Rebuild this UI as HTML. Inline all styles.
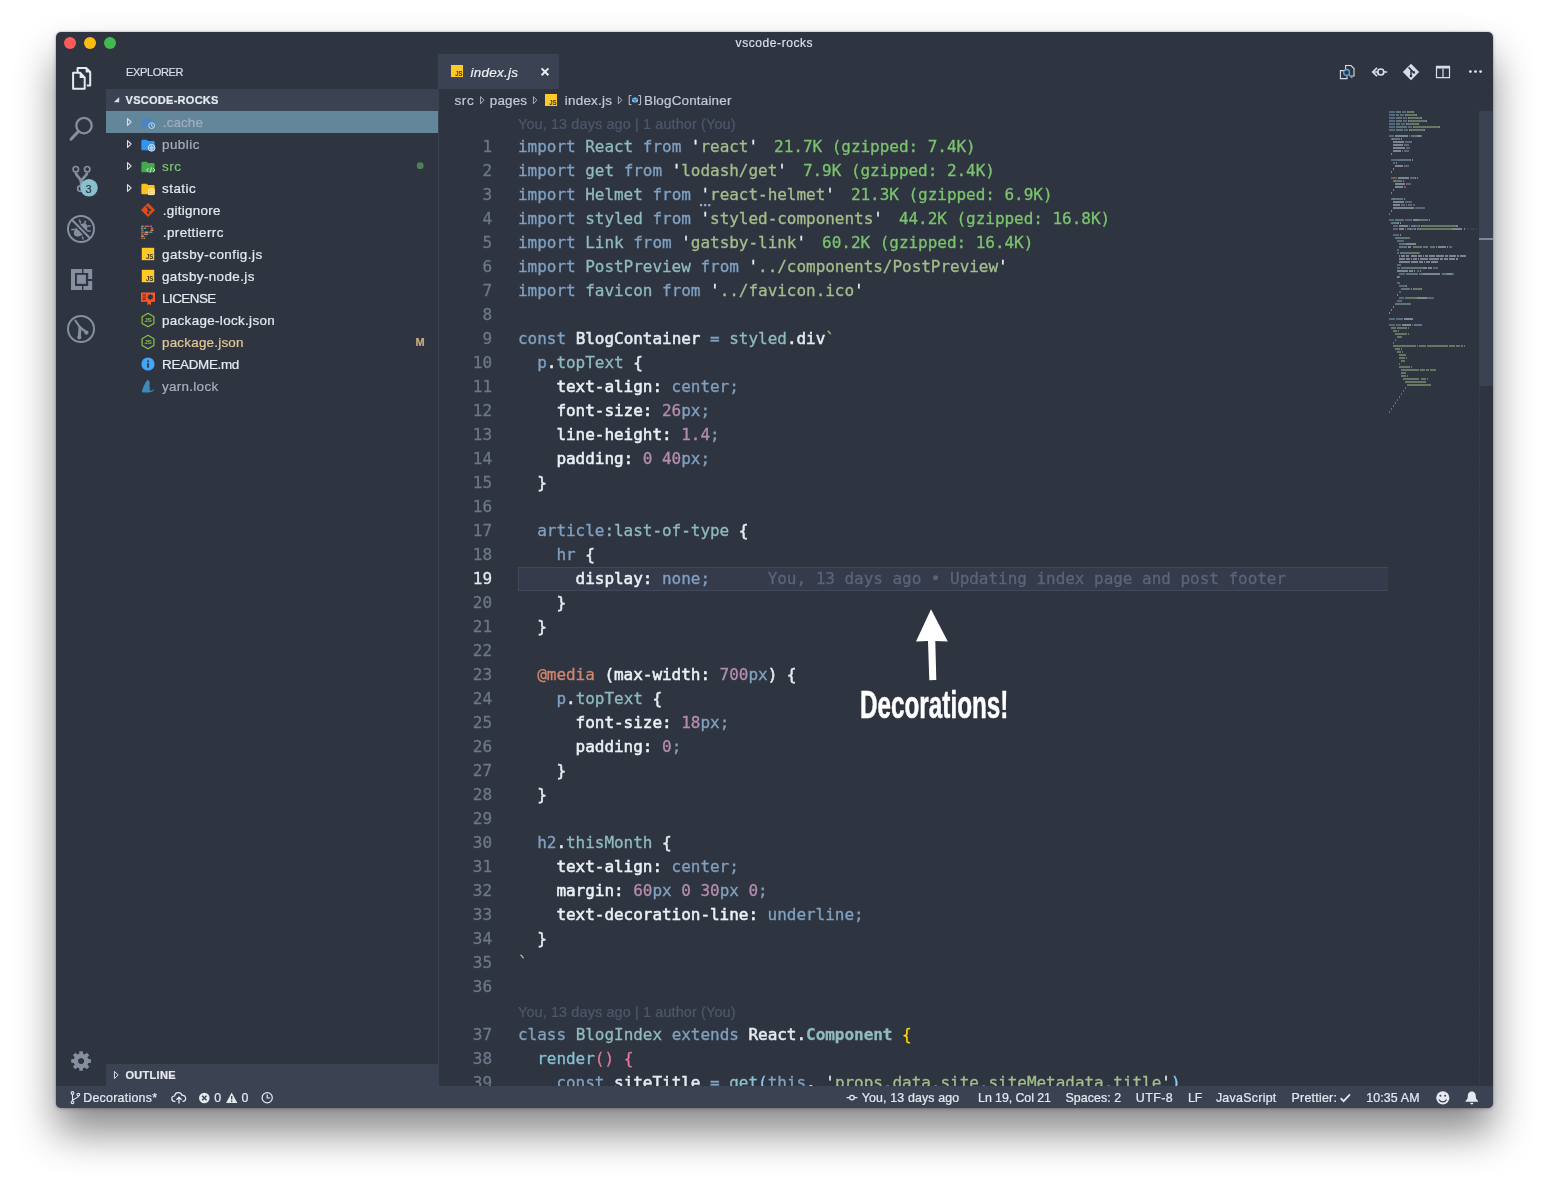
<!DOCTYPE html>
<html lang="en">
<head>
<meta charset="utf-8">
<title>vscode-rocks</title>
<style>
*{box-sizing:border-box;margin:0;padding:0}
html,body{width:1549px;height:1188px;background:#fff;overflow:hidden}
body{position:relative;font-family:"Liberation Sans", sans-serif}
#shadow{position:absolute;left:56px;top:32px;width:1437px;height:1076px;border-radius:5px;
 box-shadow:0 0 0 1px rgba(0,0,0,.08),0 1px 4px rgba(0,0,0,.20),0 25px 40px rgba(0,0,0,.46)}
#win{will-change:transform;position:absolute;left:56px;top:32px;width:1437px;height:1076px;background:#2e3440;border-radius:5px;overflow:hidden}
.abs{position:absolute}
.t{position:absolute;white-space:pre;-webkit-text-stroke:.22px}
.tl{position:absolute;top:5px;width:12px;height:12px;border-radius:50%}
#code{left:383px;top:79px;width:1054px;height:975px;overflow:hidden;font-family:"DejaVu Sans Mono", "Liberation Mono", monospace;font-size:16px;letter-spacing:-0.0328px;-webkit-text-stroke:.3px}
.ln{position:absolute;left:0;width:53px;height:24px;line-height:24px;text-align:right;color:#6d7789}
.ln.cur{color:#e5e9f0}
.cl{position:absolute;left:79px;height:24px;line-height:24px;white-space:pre;color:#d8dee9}
.kw{color:#81a1c1}.cls{color:#8fbcbb}.clsb{color:#8fbcbb;font-weight:bold}.fn{color:#88c0d0}.s{color:#a3be8c}.q{color:#eceff4}
.w{color:#e5e9f0;-webkit-text-stroke:.55px}.wb{color:#eceff4;-webkit-text-stroke:.55px}.n{color:#b48ead}.at{color:#d08770}.ic{color:#7cc36e;margin-left:16px}
.b1{color:#ffd700}.b2{color:#e07a9c}.b3{color:#87cefa}.v{color:#d8dee9}.ghost{color:#5b6578}
</style>
</head>
<body>
<div id="shadow"></div>
<div id="win">
 <div class="tl" style="left:8px;background:#fc5b57"></div>
 <div class="tl" style="left:28px;background:#fdbc12"></div>
 <div class="tl" style="left:48px;background:#3fb950"></div>
<span class="t" style="left:679.60px;top:1.00px;line-height:20px;font-size:12px;color:#d8dee9;letter-spacing:0.576px;">vscode-rocks</span>
<svg class="abs" style="left:0;top:0" width="1437" height="1076" viewBox="56 32 1437 1076"><g fill="none" stroke="#e5e9f0" stroke-width="2" stroke-linejoin="round"><path d="M73.100 72.800h7l4.600 4.600v11.300h-11.600z"/><path d="M77.6 72V68h8.6l4 4v13.6h-3.4"/></g><path d="M79.600 72.600v5.400h5.400z" fill="#e5e9f0"/><path d="M85.6 67.8v4.8h4.8z" fill="#e5e9f0"/><circle cx="84" cy="125.6" r="7.7" fill="none" stroke="#868f9e" stroke-width="2.3"/><path d="M78.4 131.4L71 139.2" stroke="#868f9e" stroke-width="3" stroke-linecap="round"/><g fill="none" stroke="#868f9e"><circle cx="75.8" cy="169.2" r="2.7" stroke-width="1.7"/><circle cx="87.2" cy="169.2" r="2.7" stroke-width="1.7"/><circle cx="80.3" cy="188.6" r="2.7" stroke-width="1.7"/><path d="M75.8 172.4c0 4 5 5 5.2 9.5M87.2 172.4c0 4 -5.6 5 -6 9.5v4" stroke-width="2.8"/></g><circle cx="89" cy="187.8" r="8.8" fill="#88c0d0"/><g stroke="#868f9e" fill="none"><circle cx="81" cy="229" r="13" stroke-width="2"/><ellipse cx="80.700" cy="230" rx="4.800" ry="8.200" transform="rotate(47 80.700 230)" fill="#868f9e" stroke="none"/><path d="M71.200 229.400h4.400M82.200 236.600l1.100 2.900M79.300 219.600l1.300 4M85.500 220.800l-.9 3.400M87.400 225.900h3.300M86.200 229.600l1.400 1.500h3.100" stroke-width="1.500"/><path d="M74.200 222.100l13.800 14.100" stroke="#2e3440" stroke-width="5.200"/><path d="M71.900 219.700l18.300 18.700" stroke-width="2.100"/></g><g fill="#868f9e"><path d="M71 269h11v4h-7v13h7v4h-11z"/><path d="M83.400 269h8.800v10h-4v-6h-4.800z"/><path d="M88.200 281h4v9h-8.800v-4h4.800z"/><rect x="76.9" y="274.8" width="9" height="9"/></g><g stroke="#868f9e" fill="none"><circle cx="81" cy="329" r="13" stroke-width="2"/><path d="M75.400 320.600l4.600 6.800" stroke-width="2" stroke-linecap="round"/><path d="M80 327.400l-.7 9.800" stroke-width="3" stroke-linecap="round"/><path d="M80.200 327.600l6 4.400" stroke-width="2.400" stroke-linecap="round"/></g><circle cx="79.3" cy="337.3" r="2.1" fill="#868f9e"/><circle cx="86.4" cy="332.6" r="2.1" fill="#868f9e"/><path d="M88.25 1059.10 L90.96 1059.31 L90.96 1062.69 L88.25 1062.90 L87.50 1064.71 L89.27 1066.77 L86.87 1069.17 L84.81 1067.40 L83.00 1068.15 L82.79 1070.86 L79.41 1070.86 L79.20 1068.15 L77.39 1067.40 L75.33 1069.17 L72.93 1066.77 L74.70 1064.71 L73.95 1062.90 L71.24 1062.69 L71.24 1059.31 L73.95 1059.10 L74.70 1057.29 L72.93 1055.23 L75.33 1052.83 L77.39 1054.60 L79.20 1053.85 L79.41 1051.14 L82.79 1051.14 L83.00 1053.85 L84.81 1054.60 L86.87 1052.83 L89.27 1055.23 L87.50 1057.29 Z M81.10 1057.90 a3.1 3.1 0 1 0 0.01 0z" fill="#868f9e" fill-rule="evenodd"/></svg><span class="t" style="left:29.40px;top:146.80px;line-height:20px;font-size:11px;color:#2e3440;letter-spacing:0.875px;">3</span>
<div class="abs" style="left:50px;top:57px;width:332px;height:22px;background:#3b4252;"></div>
<div class="abs" style="left:50px;top:79px;width:332px;height:22px;background:#64869a;"></div>
<div class="abs" style="left:50px;top:1032px;width:332px;height:22px;background:#3b4252;"></div>
<div class="abs" style="left:382px;top:22px;width:1px;height:1032px;background:#3b4252;"></div>
<span class="t" style="left:70.00px;top:30.00px;line-height:20px;font-size:11px;color:#d8dee9;letter-spacing:-0.340px;">EXPLORER</span>
<span class="t" style="left:69.60px;top:58.20px;line-height:20px;font-size:11px;color:#e5e9f0;letter-spacing:0.271px;font-weight:bold;">VSCODE-ROCKS</span>
<span class="t" style="left:69.40px;top:1033.10px;line-height:20px;font-size:11px;color:#e5e9f0;letter-spacing:0.303px;font-weight:bold;">OUTLINE</span>
<span class="t" style="left:106.80px;top:81.00px;line-height:20px;font-size:13.4px;color:#9fb0bd;letter-spacing:0.124px;">.cache</span>
<svg class="abs" style="left:84px;top:82.6px" width="16" height="16" viewBox="0 0 16 16"  opacity=".9"><g opacity="1"><path d="M6.67 2.67H2.67c-.74 0-1.33.59-1.33 1.33v8c0 .73.6 1.33 1.33 1.33h10.67c.73 0 1.33-.6 1.33-1.33V5.33c0-.74-.6-1.33-1.33-1.33H8L6.67 2.67z" fill="#4a86c0"/><circle cx="11.6" cy="10.6" r="3.6" fill="#4a86c0"/><circle cx="11.6" cy="10.6" r="2.9" fill="none" stroke="#d6e6f5" stroke-width="1"/><path d="M11.6 8.8v2l1.5 .9" stroke="#d6e6f5" stroke-width=".9" fill="none"/></g></svg>
<span class="t" style="left:106.00px;top:103.00px;line-height:20px;font-size:13.4px;color:#a7afbd;letter-spacing:0.483px;">public</span>
<svg class="abs" style="left:84px;top:104.6px" width="16" height="16" viewBox="0 0 16 16" ><g opacity="1"><path d="M6.67 2.67H2.67c-.74 0-1.33.59-1.33 1.33v8c0 .73.6 1.33 1.33 1.33h10.67c.73 0 1.33-.6 1.33-1.33V5.33c0-.74-.6-1.33-1.33-1.33H8L6.67 2.67z" fill="#2f96f3"/><circle cx="11.6" cy="10.8" r="3.4" fill="#2f8fe8" stroke="#cfe6fb" stroke-width="1"/><path d="M8.4 10.8h6.4M11.6 7.6v6.4M9.8 8.2c1 2 1 3.6 0 5.4M13.4 8.2c-1 2-1 3.6 0 5.4" stroke="#cfe6fb" stroke-width=".7" fill="none"/></g></svg>
<span class="t" style="left:106.00px;top:125.00px;line-height:20px;font-size:13.4px;color:#7cc36e;letter-spacing:0.514px;">src</span>
<svg class="abs" style="left:84px;top:126.6px" width="16" height="16" viewBox="0 0 16 16" ><g opacity="1"><path d="M6.67 2.67H2.67c-.74 0-1.33.59-1.33 1.33v8c0 .73.6 1.33 1.33 1.33h10.67c.73 0 1.33-.6 1.33-1.33V5.33c0-.74-.6-1.33-1.33-1.33H8L6.67 2.67z" fill="#43a94c"/><path d="M8.6 9l-2 2 2 2M13 9l2 2-2 2M11.6 8.4l-1.6 5.4" stroke="#c8e6c9" stroke-width="1" fill="none"/></g></svg>
<span class="t" style="left:106.00px;top:147.00px;line-height:20px;font-size:13.4px;color:#e5e9f0;letter-spacing:0.489px;">static</span>
<svg class="abs" style="left:84px;top:148.6px" width="16" height="16" viewBox="0 0 16 16" ><g opacity="1"><path d="M6.67 2.67H2.67c-.74 0-1.33.59-1.33 1.33v8c0 .73.6 1.33 1.33 1.33h10.67c.73 0 1.33-.6 1.33-1.33V5.33c0-.74-.6-1.33-1.33-1.33H8L6.67 2.67z" fill="#fdc11a"/><rect x="8" y="7.4" width="6.6" height="6.6" rx=".8" fill="#ffc927"/><rect x="8.6" y="8" width="5.6" height="5.6" rx=".6" fill="none" stroke="#fff1c2" stroke-width=".9"/><path d="M9.8 9.8h3.2M9.8 11.6h3.2" stroke="#fff1c2" stroke-width=".9"/></g></svg>
<span class="t" style="left:106.80px;top:169.00px;line-height:20px;font-size:13.4px;color:#e5e9f0;letter-spacing:0.291px;">.gitignore</span>
<svg class="abs" style="left:84px;top:170px" width="16" height="16" viewBox="0 0 16 16" ><path d="M8 .9L15.1 8 8 15.1 .9 8z" fill="#e64a19"/><path d="M6.2 4.4l3.4 3.4M8.2 6.2v5" stroke="#2e3440" stroke-width="1.3" fill="none"/><circle cx="8.2" cy="11" r="1.1" fill="#2e3440"/><circle cx="10.2" cy="8.2" r="1.1" fill="#2e3440"/></svg>
<span class="t" style="left:106.80px;top:191.00px;line-height:20px;font-size:13.4px;color:#e5e9f0;letter-spacing:0.403px;">.prettierrc</span>
<svg class="abs" style="left:84px;top:192px" width="16" height="16" viewBox="0 0 16 16"  opacity=".82"><rect x="1" y="1.6" width="3" height="1.3" rx=".6" fill="#56b3b4"/><rect x="4.5" y="1.6" width="5" height="1.3" rx=".6" fill="#ea5e5e"/><rect x="10" y="1.6" width="2" height="1.3" rx=".6" fill="#bf85bf"/><rect x="1" y="3.6" width="2" height="1.3" rx=".6" fill="#f7ba3e"/><rect x="3.5" y="3.6" width="3" height="1.3" rx=".6" fill="#56b3b4"/><rect x="10.5" y="3.6" width="3" height="1.3" rx=".6" fill="#ea5e5e"/><rect x="1" y="5.6" width="2.5" height="1.3" rx=".6" fill="#bf85bf"/><rect x="10.5" y="5.6" width="3" height="1.3" rx=".6" fill="#f7ba3e"/><rect x="1" y="7.6" width="3" height="1.3" rx=".6" fill="#ea5e5e"/><rect x="4.5" y="7.6" width="4" height="1.3" rx=".6" fill="#f7ba3e"/><rect x="9" y="7.6" width="3.5" height="1.3" rx=".6" fill="#56b3b4"/><rect x="1" y="9.6" width="2" height="1.3" rx=".6" fill="#56b3b4"/><rect x="3.5" y="9.6" width="5" height="1.3" rx=".6" fill="#bf85bf"/><rect x="1" y="11.6" width="3" height="1.3" rx=".6" fill="#f7ba3e"/><rect x="4.5" y="11.6" width="2" height="1.3" rx=".6" fill="#4d616e"/><rect x="1" y="13.6" width="2" height="1.3" rx=".6" fill="#ea5e5e"/><rect x="3.5" y="13.6" width="1.5" height="1.3" rx=".6" fill="#f7ba3e"/></svg>
<span class="t" style="left:106.00px;top:213.00px;line-height:20px;font-size:13.4px;color:#e5e9f0;letter-spacing:0.472px;">gatsby-config.js</span>
<svg class="abs" style="left:84px;top:214px" width="16" height="16" viewBox="0 0 16 16" ><rect x="1.8" y="1.8" width="12.4" height="12.4" fill="#ffca28"/><text x="13.4" y="13.1" text-anchor="end" font-family="Liberation Sans, sans-serif" font-weight="bold" font-size="7" fill="#3a3320" textLength="7.400" lengthAdjust="spacingAndGlyphs">JS</text></svg>
<span class="t" style="left:106.00px;top:235.00px;line-height:20px;font-size:13.4px;color:#e5e9f0;letter-spacing:0.408px;">gatsby-node.js</span>
<svg class="abs" style="left:84px;top:236px" width="16" height="16" viewBox="0 0 16 16" ><rect x="1.8" y="1.8" width="12.4" height="12.4" fill="#ffca28"/><text x="13.4" y="13.1" text-anchor="end" font-family="Liberation Sans, sans-serif" font-weight="bold" font-size="7" fill="#3a3320" textLength="7.400" lengthAdjust="spacingAndGlyphs">JS</text></svg>
<span class="t" style="left:106.00px;top:257.00px;line-height:20px;font-size:13.4px;color:#e5e9f0;letter-spacing:-0.502px;">LICENSE</span>
<svg class="abs" style="left:84px;top:258px" width="16" height="16" viewBox="0 0 16 16" ><path d="M1 2.4h14v9.4h-4v3.4l-1.8-1.2-1.8 1.2v-3.4H1z" fill="#ff5722"/><path d="M2.6 5h3.4M2.6 7.2h3.4M2.6 9.4h3" stroke="#2e3440" stroke-width="1.1"/><path d="M10.4 3.8l.8 1.3 1.5-.3-.3 1.5 1.3.8-1.3.8.3 1.5-1.5-.3-.8 1.3-.8-1.3-1.5.3.3-1.5-1.3-.8 1.3-.8-.3-1.5 1.5.3z" fill="#2e3440"/></svg>
<span class="t" style="left:106.00px;top:279.00px;line-height:20px;font-size:13.4px;color:#e5e9f0;letter-spacing:0.342px;">package-lock.json</span>
<svg class="abs" style="left:84px;top:280px" width="16" height="16" viewBox="0 0 16 16" ><path d="M8 1.3l5.9 3.4v6.7L8 14.8l-5.9-3.4V4.7z" fill="none" stroke="#8bc34a" stroke-width="1.2" stroke-linejoin="round"/><text x="8.1" y="10.4" text-anchor="middle" font-family="Liberation Sans, sans-serif" font-weight="bold" font-size="6" fill="#8bc34a">JS</text></svg>
<span class="t" style="left:106.00px;top:301.00px;line-height:20px;font-size:13.4px;color:#e3c795;letter-spacing:0.232px;">package.json</span>
<svg class="abs" style="left:84px;top:302px" width="16" height="16" viewBox="0 0 16 16" ><path d="M8 1.3l5.9 3.4v6.7L8 14.8l-5.9-3.4V4.7z" fill="none" stroke="#8bc34a" stroke-width="1.2" stroke-linejoin="round"/><text x="8.1" y="10.4" text-anchor="middle" font-family="Liberation Sans, sans-serif" font-weight="bold" font-size="6" fill="#8bc34a">JS</text></svg>
<span class="t" style="left:106.00px;top:323.00px;line-height:20px;font-size:13.4px;color:#e5e9f0;letter-spacing:-0.292px;">README.md</span>
<svg class="abs" style="left:84px;top:324px" width="16" height="16" viewBox="0 0 16 16" ><circle cx="8" cy="8" r="6.6" fill="#42a5f5"/><rect x="7.2" y="7.1" width="1.7" height="4.6" fill="#2e3440"/><rect x="7.2" y="4.4" width="1.7" height="1.7" fill="#2e3440"/></svg>
<span class="t" style="left:106.00px;top:345.00px;line-height:20px;font-size:13.4px;color:#a7afbd;letter-spacing:0.312px;">yarn.lock</span>
<svg class="abs" style="left:84px;top:346px" width="16" height="16" viewBox="0 0 16 16" ><path d="M8 1.400L9.400 3.400C10.200 5 9.600 6.400 9.400 7.600C10 9.400 10 11.400 9.600 12.800L12 12.600L14 11.200L14.400 12L12.400 13.600L9 14.400L3 14.600C1.800 14.400 1.600 13.400 2.200 12.200C3 9.600 4 7 5.400 4.800C6 3.400 7 2.200 8 1.400Z" fill="#3b8ab8"/></svg>
<span class="t" style="left:359.40px;top:300.00px;line-height:20px;font-size:11px;color:#c9ae7c;letter-spacing:1.828px;font-weight:bold;">M</span>
<svg class="abs" style="left:0;top:0" width="1437" height="1076" viewBox="56 32 1437 1076"><path d="M119.2 96.9v5.4h-5.4z" fill="#d8dee9"/><path d="M114.400 1071.400l3.800 3.600-3.800 3.600z" fill="none" stroke="#d8dee9" stroke-width="1"/><path d="M127.5 118.6 l3.6 3.4 -3.6 3.4z" fill="none" stroke="#d8dee9" stroke-width="1.1" stroke-linejoin="round"/><path d="M127.5 140.6 l3.6 3.4 -3.6 3.4z" fill="none" stroke="#d8dee9" stroke-width="1.1" stroke-linejoin="round"/><path d="M127.5 162.6 l3.6 3.4 -3.6 3.4z" fill="none" stroke="#d8dee9" stroke-width="1.1" stroke-linejoin="round"/><path d="M127.5 184.6 l3.6 3.4 -3.6 3.4z" fill="none" stroke="#d8dee9" stroke-width="1.1" stroke-linejoin="round"/><circle cx="420.2" cy="165.7" r="3.4" fill="#4f7f57"/></svg>
<div class="abs" style="left:383px;top:22px;width:120px;height:35px;background:#3b4252;"></div>
<svg class="abs" style="left:395px;top:33px" width="12.4" height="12.4" viewBox="0 0 12.4 12.4" ><rect x="0" y="0" width="12.4" height="12.4" fill="#ffca28"/><text x="11.6" y="11.3" text-anchor="end" font-family="Liberation Sans, sans-serif" font-weight="bold" font-size="7" fill="#3a3320" textLength="7.400" lengthAdjust="spacingAndGlyphs">JS</text></svg>
<span class="t" style="left:414.60px;top:30.80px;line-height:20px;font-size:13.4px;color:#eceff4;letter-spacing:0.274px;font-style:italic;">index.js</span>
<span class="t" style="left:398.40px;top:59.00px;line-height:20px;font-size:13.4px;color:#c3c9d5;letter-spacing:0.780px;">src</span>
<span class="t" style="left:433.80px;top:59.00px;line-height:20px;font-size:13.4px;color:#c3c9d5;letter-spacing:0.183px;">pages</span>
<svg class="abs" style="left:488.6px;top:62px" width="12.4" height="12.4" viewBox="0 0 12.4 12.4" ><rect x="0" y="0" width="12.4" height="12.4" fill="#ffca28"/><text x="11.6" y="11.3" text-anchor="end" font-family="Liberation Sans, sans-serif" font-weight="bold" font-size="7" fill="#3a3320" textLength="7.400" lengthAdjust="spacingAndGlyphs">JS</text></svg>
<span class="t" style="left:508.80px;top:59.00px;line-height:20px;font-size:13.4px;color:#c3c9d5;letter-spacing:0.249px;">index.js</span>
<span class="t" style="left:588.00px;top:59.00px;line-height:20px;font-size:13.4px;color:#c3c9d5;letter-spacing:0.210px;">BlogContainer</span>
<svg class="abs" style="left:0;top:0" width="1437" height="1076" viewBox="56 32 1437 1076"><path d="M541.6 68.4l6.8 6.8M548.4 68.4l-6.8 6.8" stroke="#eceff4" stroke-width="2"/><path d="M480.6 96.6l3.4 3.6-3.4 3.6z" fill="none" stroke="#aab1bf" stroke-width="1"/><path d="M533.4 96.6l3.4 3.6-3.4 3.6z" fill="none" stroke="#aab1bf" stroke-width="1"/><path d="M618.4 96.6l3.4 3.6-3.4 3.6z" fill="none" stroke="#aab1bf" stroke-width="1"/><path d="M631.4 95.6h-2.2v9h2.2M638.4 95.6h2.2v9h-2.2" fill="none" stroke="#c3c9d5" stroke-width="1"/><path d="M632 98.6l3-1.4 3 1.4v3l-3 1.4-3-1.400z" fill="#75beff"/><path d="M632 98.600l3 1.400 3-1.400M635 100v3" stroke="#2e3440" stroke-width=".6" fill="none"/><g fill="none" stroke="#d8dee9" stroke-width="1.1"><path d="M1345.600 70.500v-5h5.400l3 3v7.500h-3"/><path d="M1344.200 70.600h-3.800v8h6.600v-2.400"/></g><circle cx="1346.600" cy="72.400" r="2.900" fill="none" stroke="#5aa9e0" stroke-width="1.300"/><path d="M1348.800 74.600l3.400 3.400" stroke="#5aa9e0" stroke-width="1.400"/><g fill="none" stroke="#d8dee9" stroke-width="1.700"><path d="M1377 67.800l-4.200 4.200 4.200 4.200"/><circle cx="1380.800" cy="72" r="3"/><path d="M1373.400 72h4.400M1383.800 72h3.400"/></g><path d="M1411 63.800l8.200 8.200-8.200 8.200-8.200-8.200z" fill="#d8dee9"/><path d="M1408.600 67.400l4.600 4.600M1411 69.600v6.400" stroke="#2e3440" stroke-width="1.500" fill="none"/><circle cx="1411" cy="76" r="1.300" fill="#2e3440"/><circle cx="1413.800" cy="72.400" r="1.300" fill="#2e3440"/><path d="M1436.500 66.300h13v11.400h-13zM1443 68.400v9.300" fill="none" stroke="#d8dee9" stroke-width="1.200"/><path d="M1436.500 66.300h13v2.200h-13z" fill="#d8dee9"/><circle cx="1470.4" cy="71.600" r="1.400" fill="#d8dee9"/><circle cx="1475.5" cy="71.600" r="1.400" fill="#d8dee9"/><circle cx="1480.6" cy="71.600" r="1.400" fill="#d8dee9"/></svg>
<div class="abs" style="left:462px;top:535px;width:870px;height:24px;background:#353b4a;border-top:1px solid #404859;border-bottom:1px solid #404859;border-left:1px solid #404859"></div>
<span class="t" style="left:462.00px;top:82.00px;line-height:20px;font-size:14.4px;color:#4e586b;letter-spacing:0.136px;">You, 13 days ago | 1 author (You)</span>
<span class="t" style="left:462.00px;top:970.00px;line-height:20px;font-size:14.4px;color:#4e586b;letter-spacing:0.136px;">You, 13 days ago | 1 author (You)</span>
<svg class="abs" style="left:0;top:0" width="1437" height="1076" viewBox="56 32 1437 1076"><path d="M700 204h2.200v2.200h-2.200zM704.100 204h2.200v2.200h-2.200zM708.200 204h2.200v2.200h-2.200z" fill="#a4abb8"/><path d="M1479.500 111v975" stroke="#3b4252" stroke-width="1" stroke-dasharray="2 1" opacity=".8"/></svg>
<div class="abs" style="left:1423px;top:79px;width:14px;height:275px;background:#3b4252;"></div>
<div class="abs" style="left:1423px;top:206px;width:14px;height:2px;background:#7f8898;"></div>
 <div id="code" class="abs">
<div class="ln" style="top:24px">1</div>
<div class="cl" style="top:24px"><span class="kw">import</span><span class="v"> </span><span class="cls">React</span><span class="v"> </span><span class="kw">from</span><span class="v"> </span><span class="q">'</span><span class="s">react</span><span class="q">'</span><span class="ic">21.7K (gzipped: 7.4K)</span></div>
<div class="ln" style="top:48px">2</div>
<div class="cl" style="top:48px"><span class="kw">import</span><span class="v"> </span><span class="cls">get</span><span class="v"> </span><span class="kw">from</span><span class="v"> </span><span class="q">'</span><span class="s">lodash/get</span><span class="q">'</span><span class="ic">7.9K (gzipped: 2.4K)</span></div>
<div class="ln" style="top:72px">3</div>
<div class="cl" style="top:72px"><span class="kw">import</span><span class="v"> </span><span class="cls">Helmet</span><span class="v"> </span><span class="kw">from</span><span class="v"> </span><span class="q">'</span><span class="s">react-helmet</span><span class="q">'</span><span class="ic">21.3K (gzipped: 6.9K)</span></div>
<div class="ln" style="top:96px">4</div>
<div class="cl" style="top:96px"><span class="kw">import</span><span class="v"> </span><span class="cls">styled</span><span class="v"> </span><span class="kw">from</span><span class="v"> </span><span class="q">'</span><span class="s">styled-components</span><span class="q">'</span><span class="ic">44.2K (gzipped: 16.8K)</span></div>
<div class="ln" style="top:120px">5</div>
<div class="cl" style="top:120px"><span class="kw">import</span><span class="v"> </span><span class="cls">Link</span><span class="v"> </span><span class="kw">from</span><span class="v"> </span><span class="q">'</span><span class="s">gatsby-link</span><span class="q">'</span><span class="ic">60.2K (gzipped: 16.4K)</span></div>
<div class="ln" style="top:144px">6</div>
<div class="cl" style="top:144px"><span class="kw">import</span><span class="v"> </span><span class="cls">PostPreview</span><span class="v"> </span><span class="kw">from</span><span class="v"> </span><span class="q">'</span><span class="s">../components/PostPreview</span><span class="q">'</span></div>
<div class="ln" style="top:168px">7</div>
<div class="cl" style="top:168px"><span class="kw">import</span><span class="v"> </span><span class="cls">favicon</span><span class="v"> </span><span class="kw">from</span><span class="v"> </span><span class="q">'</span><span class="s">../favicon.ico</span><span class="q">'</span></div>
<div class="ln" style="top:192px">8</div>
<div class="ln" style="top:216px">9</div>
<div class="cl" style="top:216px"><span class="kw">const</span><span class="v"> </span><span class="w">BlogContainer</span><span class="v"> </span><span class="kw">=</span><span class="v"> </span><span class="cls">styled</span><span class="w">.div</span><span class="s">`</span></div>
<div class="ln" style="top:240px">10</div>
<div class="cl" style="top:240px"><span class="v">  </span><span class="kw">p</span><span class="w">.</span><span class="cls">topText</span><span class="w"> {</span></div>
<div class="ln" style="top:264px">11</div>
<div class="cl" style="top:264px"><span class="v">    </span><span class="wb">text-align:</span><span class="kw"> center</span><span class="kw">;</span></div>
<div class="ln" style="top:288px">12</div>
<div class="cl" style="top:288px"><span class="v">    </span><span class="wb">font-size:</span><span class="n"> 26</span><span class="kw">px</span><span class="kw">;</span></div>
<div class="ln" style="top:312px">13</div>
<div class="cl" style="top:312px"><span class="v">    </span><span class="wb">line-height:</span><span class="n"> 1.4</span><span class="kw">;</span></div>
<div class="ln" style="top:336px">14</div>
<div class="cl" style="top:336px"><span class="v">    </span><span class="wb">padding:</span><span class="n"> 0 40</span><span class="kw">px</span><span class="kw">;</span></div>
<div class="ln" style="top:360px">15</div>
<div class="cl" style="top:360px"><span class="v">  </span><span class="w">}</span></div>
<div class="ln" style="top:384px">16</div>
<div class="ln" style="top:408px">17</div>
<div class="cl" style="top:408px"><span class="v">  </span><span class="kw">article</span><span class="cls">:last-of-type</span><span class="w"> {</span></div>
<div class="ln" style="top:432px">18</div>
<div class="cl" style="top:432px"><span class="v">    </span><span class="kw">hr</span><span class="w"> {</span></div>
<div class="ln cur" style="top:456px">19</div>
<div class="cl" style="top:456px"><span class="v">      </span><span class="wb">display:</span><span class="kw"> none</span><span class="kw">;</span><span class="ghost">      You, 13 days ago • Updating index page and post footer</span></div>
<div class="ln" style="top:480px">20</div>
<div class="cl" style="top:480px"><span class="v">    </span><span class="w">}</span></div>
<div class="ln" style="top:504px">21</div>
<div class="cl" style="top:504px"><span class="v">  </span><span class="w">}</span></div>
<div class="ln" style="top:528px">22</div>
<div class="ln" style="top:552px">23</div>
<div class="cl" style="top:552px"><span class="v">  </span><span class="at">@media</span><span class="wb"> (max-width:</span><span class="n"> 700</span><span class="kw">px</span><span class="w">) {</span></div>
<div class="ln" style="top:576px">24</div>
<div class="cl" style="top:576px"><span class="v">    </span><span class="kw">p</span><span class="w">.</span><span class="cls">topText</span><span class="w"> {</span></div>
<div class="ln" style="top:600px">25</div>
<div class="cl" style="top:600px"><span class="v">      </span><span class="wb">font-size:</span><span class="n"> 18</span><span class="kw">px</span><span class="kw">;</span></div>
<div class="ln" style="top:624px">26</div>
<div class="cl" style="top:624px"><span class="v">      </span><span class="wb">padding:</span><span class="n"> 0</span><span class="kw">;</span></div>
<div class="ln" style="top:648px">27</div>
<div class="cl" style="top:648px"><span class="v">    </span><span class="w">}</span></div>
<div class="ln" style="top:672px">28</div>
<div class="cl" style="top:672px"><span class="v">  </span><span class="w">}</span></div>
<div class="ln" style="top:696px">29</div>
<div class="ln" style="top:720px">30</div>
<div class="cl" style="top:720px"><span class="v">  </span><span class="kw">h2</span><span class="w">.</span><span class="cls">thisMonth</span><span class="w"> {</span></div>
<div class="ln" style="top:744px">31</div>
<div class="cl" style="top:744px"><span class="v">    </span><span class="wb">text-align:</span><span class="kw"> center</span><span class="kw">;</span></div>
<div class="ln" style="top:768px">32</div>
<div class="cl" style="top:768px"><span class="v">    </span><span class="wb">margin:</span><span class="n"> 60</span><span class="kw">px</span><span class="n"> 0 30</span><span class="kw">px</span><span class="n"> 0</span><span class="kw">;</span></div>
<div class="ln" style="top:792px">33</div>
<div class="cl" style="top:792px"><span class="v">    </span><span class="wb">text-decoration-line:</span><span class="kw"> underline</span><span class="kw">;</span></div>
<div class="ln" style="top:816px">34</div>
<div class="cl" style="top:816px"><span class="v">  </span><span class="w">}</span></div>
<div class="ln" style="top:840px">35</div>
<div class="cl" style="top:840px"><span class="s">`</span></div>
<div class="ln" style="top:864px">36</div>
<div class="ln" style="top:912px">37</div>
<div class="cl" style="top:912px"><span class="kw">class</span><span class="v"> </span><span class="cls">BlogIndex</span><span class="v"> </span><span class="kw">extends</span><span class="v"> </span><span class="w">React.</span><span class="clsb">Component</span><span class="v"> </span><span class="b1">{</span></div>
<div class="ln" style="top:936px">38</div>
<div class="cl" style="top:936px"><span class="v">  </span><span class="fn">render</span><span class="b2">()</span><span class="v"> </span><span class="b2">{</span></div>
<div class="ln" style="top:960px">39</div>
<div class="cl" style="top:960px"><span class="v">    </span><span class="kw">const</span><span class="v"> </span><span class="w">siteTitle</span><span class="v"> </span><span class="kw">=</span><span class="v"> </span><span class="fn">get</span><span class="b3">(</span><span class="kw">this</span><span class="w">, </span><span class="q">'</span><span class="s">props.data.site.siteMetadata.title</span><span class="q">'</span><span class="b3">)</span></div>
 </div>
<svg class="abs" style="left:0;top:0" width="1437" height="1076" viewBox="56 32 1437 1076"><g opacity=".48" shape-rendering="crispEdges"><path fill="#81a1c1" d="M1389.0 110.80h6v2h-6zM1402.0 110.80h4v2h-4zM1389.0 113.80h6v2h-6zM1400.0 113.80h4v2h-4zM1389.0 116.80h6v2h-6zM1403.0 116.80h4v2h-4zM1389.0 119.80h6v2h-6zM1403.0 119.80h4v2h-4zM1389.0 122.80h6v2h-6zM1401.0 122.80h4v2h-4zM1389.0 125.80h6v2h-6zM1408.0 125.80h4v2h-4zM1389.0 128.80h6v2h-6zM1404.0 128.80h4v2h-4zM1389.0 134.80h5v2h-5zM1409.0 134.80h1v2h-1zM1391.0 137.80h1v2h-1zM1405.0 140.80h6v2h-6zM1411.0 140.80h1v2h-1zM1406.0 143.80h2v2h-2zM1408.0 143.80h1v2h-1zM1409.0 146.80h1v2h-1zM1406.0 149.80h2v2h-2zM1408.0 149.80h1v2h-1zM1391.0 158.80h7v2h-7zM1393.0 161.80h2v2h-2zM1404.0 164.80h4v2h-4zM1408.0 164.80h1v2h-1zM1413.0 176.80h2v2h-2zM1393.0 179.80h1v2h-1zM1408.0 182.80h2v2h-2zM1410.0 182.80h1v2h-1zM1405.0 185.80h1v2h-1zM1391.0 197.80h2v2h-2zM1405.0 200.80h6v2h-6zM1411.0 200.80h1v2h-1zM1403.0 203.80h2v2h-2zM1410.0 203.80h2v2h-2zM1414.0 203.80h1v2h-1zM1415.0 206.80h9v2h-9zM1424.0 206.80h1v2h-1zM1389.0 218.80h5v2h-5zM1405.0 218.80h7v2h-7zM1393.0 224.80h5v2h-5zM1409.0 224.80h1v2h-1zM1415.0 224.80h4v2h-4zM1393.0 227.80h5v2h-5zM1405.0 227.80h1v2h-1zM1411.0 227.80h4v2h-4zM1393.0 233.80h6v2h-6zM1397.0 239.80h7v2h-7zM1449.0 245.80h3v2h-3zM1397.0 248.80h2v2h-2zM1397.0 251.80h2v2h-2zM1419.0 251.80h1v2h-1zM1397.0 263.80h4v2h-4zM1397.0 266.80h3v2h-3zM1422.0 266.80h1v2h-1zM1433.0 266.80h5v2h-5zM1417.0 269.80h2v2h-2zM1399.0 272.80h6v2h-6zM1452.0 272.80h2v2h-2zM1399.0 275.80h1v2h-1zM1397.0 281.80h3v2h-3zM1399.0 284.80h7v2h-7zM1399.0 290.80h2v2h-2zM1399.0 296.80h5v2h-5zM1427.0 296.80h7v2h-7zM1397.0 299.80h5v2h-5zM1389.0 317.80h6v2h-6zM1396.0 317.80h7v2h-7zM1389.0 323.80h6v2h-6zM1396.0 323.80h5v2h-5zM1412.0 323.80h1v2h-1z"/><path fill="#8fbcbb" d="M1396.0 110.80h5v2h-5zM1396.0 113.80h3v2h-3zM1396.0 116.80h6v2h-6zM1396.0 119.80h6v2h-6zM1396.0 122.80h4v2h-4zM1396.0 125.80h11v2h-11zM1396.0 128.80h7v2h-7zM1411.0 134.80h6v2h-6zM1393.0 137.80h7v2h-7zM1398.0 158.80h13v2h-13zM1395.0 179.80h7v2h-7zM1394.0 197.80h9v2h-9zM1395.0 218.80h9v2h-9zM1419.0 218.80h9v2h-9zM1395.0 236.80h15v2h-15zM1399.0 242.80h7v2h-7zM1399.0 245.80h8v2h-8zM1430.0 245.80h5v2h-5zM1400.0 251.80h10v2h-10zM1401.0 266.80h10v2h-10zM1406.0 272.80h12v2h-12zM1419.0 272.80h4v2h-4zM1442.0 272.80h5v2h-5zM1401.0 287.80h9v2h-9zM1405.0 296.80h3v2h-3zM1395.0 302.80h16v2h-16z"/><path fill="#d8dee9" d="M1407.0 110.80h1v2h-1zM1413.0 110.80h1v2h-1zM1405.0 113.80h1v2h-1zM1416.0 113.80h1v2h-1zM1408.0 116.80h1v2h-1zM1421.0 116.80h1v2h-1zM1408.0 119.80h1v2h-1zM1426.0 119.80h1v2h-1zM1406.0 122.80h1v2h-1zM1418.0 122.80h1v2h-1zM1413.0 125.80h1v2h-1zM1439.0 125.80h1v2h-1zM1409.0 128.80h1v2h-1zM1424.0 128.80h1v2h-1zM1395.0 134.80h13v2h-13zM1417.0 134.80h4v2h-4zM1392.0 137.80h1v2h-1zM1401.0 137.80h1v2h-1zM1393.0 140.80h11v2h-11zM1393.0 143.80h10v2h-10zM1393.0 146.80h12v2h-12zM1393.0 149.80h8v2h-8zM1391.0 152.80h1v2h-1zM1412.0 158.80h1v2h-1zM1396.0 161.80h1v2h-1zM1395.0 164.80h8v2h-8zM1393.0 167.80h1v2h-1zM1391.0 170.80h1v2h-1zM1398.0 176.80h11v2h-11zM1415.0 176.80h1v2h-1zM1417.0 176.80h1v2h-1zM1394.0 179.80h1v2h-1zM1403.0 179.80h1v2h-1zM1395.0 182.80h10v2h-10zM1395.0 185.80h8v2h-8zM1393.0 188.80h1v2h-1zM1391.0 191.80h1v2h-1zM1393.0 197.80h1v2h-1zM1404.0 197.80h1v2h-1zM1393.0 200.80h11v2h-11zM1393.0 203.80h7v2h-7zM1393.0 206.80h21v2h-21zM1391.0 209.80h1v2h-1zM1413.0 218.80h6v2h-6zM1429.0 218.80h1v2h-1zM1397.0 221.80h2v2h-2zM1400.0 221.80h1v2h-1zM1399.0 224.80h9v2h-9zM1414.0 224.80h1v2h-1zM1419.0 224.80h1v2h-1zM1421.0 224.80h1v2h-1zM1456.0 224.80h1v2h-1zM1457.0 224.80h1v2h-1zM1399.0 227.80h5v2h-5zM1410.0 227.80h1v2h-1zM1415.0 227.80h1v2h-1zM1417.0 227.80h1v2h-1zM1452.0 227.80h10v2h-10zM1464.0 227.80h1v2h-1zM1400.0 233.80h1v2h-1zM1406.0 242.80h10v2h-10zM1408.0 245.80h3v2h-3zM1436.0 245.80h1v2h-1zM1438.0 245.80h8v2h-8zM1447.0 245.80h1v2h-1zM1399.0 254.80h1v2h-1zM1401.0 254.80h4v2h-4zM1406.0 254.80h3v2h-3zM1411.0 254.80h6v2h-6zM1418.0 254.80h4v2h-4zM1423.0 254.80h1v2h-1zM1425.0 254.80h3v2h-3zM1429.0 254.80h6v2h-6zM1436.0 254.80h8v2h-8zM1445.0 254.80h3v2h-3zM1449.0 254.80h7v2h-7zM1457.0 254.80h2v2h-2zM1460.0 254.80h6v2h-6zM1399.0 257.80h6v2h-6zM1406.0 257.80h4v2h-4zM1411.0 257.80h1v2h-1zM1413.0 257.80h4v2h-4zM1418.0 257.80h1v2h-1zM1420.0 257.80h8v2h-8zM1429.0 257.80h10v2h-10zM1440.0 257.80h3v2h-3zM1444.0 257.80h4v2h-4zM1449.0 257.80h6v2h-6zM1456.0 257.80h2v2h-2zM1399.0 260.80h11v2h-11zM1411.0 260.80h7v2h-7zM1419.0 260.80h4v2h-4zM1424.0 260.80h1v2h-1zM1426.0 260.80h4v2h-4zM1431.0 260.80h7v2h-7zM1423.0 266.80h4v2h-4zM1428.0 266.80h4v2h-4zM1397.0 269.80h11v2h-11zM1409.0 269.80h4v2h-4zM1414.0 269.80h1v2h-1zM1420.0 269.80h1v2h-1zM1423.0 272.80h17v2h-17zM1447.0 272.80h5v2h-5zM1397.0 275.80h2v2h-2zM1406.0 284.80h1v2h-1zM1411.0 287.80h1v2h-1zM1413.0 287.80h1v2h-1zM1421.0 287.80h1v2h-1zM1397.0 293.80h1v2h-1zM1417.0 296.80h1v2h-1zM1418.0 296.80h9v2h-9zM1393.0 305.80h1v2h-1zM1391.0 308.80h1v2h-1zM1389.0 311.80h1v2h-1zM1404.0 317.80h9v2h-9zM1402.0 323.80h9v2h-9z"/><path fill="#a3be8c" d="M1408.0 110.80h5v2h-5zM1406.0 113.80h10v2h-10zM1409.0 116.80h12v2h-12zM1409.0 119.80h17v2h-17zM1407.0 122.80h11v2h-11zM1414.0 125.80h25v2h-25zM1410.0 128.80h14v2h-14zM1421.0 134.80h1v2h-1zM1389.0 212.80h1v2h-1zM1422.0 224.80h34v2h-34zM1418.0 227.80h34v2h-34zM1413.0 245.80h9v2h-9zM1423.0 245.80h5v2h-5zM1410.0 251.80h9v2h-9zM1411.0 266.80h11v2h-11zM1414.0 287.80h7v2h-7zM1408.0 296.80h9v2h-9zM1421.0 323.80h1v2h-1zM1391.0 326.80h5v2h-5zM1397.0 326.80h10v2h-10zM1408.0 326.80h1v2h-1zM1393.0 329.80h4v2h-4zM1398.0 329.80h1v2h-1zM1395.0 332.80h12v2h-12zM1408.0 332.80h1v2h-1zM1397.0 335.80h5v2h-5zM1395.0 338.80h1v2h-1zM1393.0 341.80h1v2h-1zM1393.0 344.80h23v2h-23zM1417.0 344.80h1v2h-1zM1419.0 344.80h7v2h-7zM1427.0 344.80h21v2h-21zM1449.0 344.80h6v2h-6zM1456.0 344.80h4v2h-4zM1461.0 344.80h2v2h-2zM1464.0 344.80h1v2h-1zM1395.0 347.80h5v2h-5zM1401.0 347.80h1v2h-1zM1397.0 350.80h4v2h-4zM1402.0 350.80h1v2h-1zM1399.0 353.80h7v2h-7zM1399.0 356.80h6v2h-6zM1406.0 356.80h1v2h-1zM1401.0 359.80h4v2h-4zM1399.0 362.80h1v2h-1zM1399.0 365.80h11v2h-11zM1411.0 365.80h1v2h-1zM1401.0 368.80h18v2h-18zM1420.0 368.80h5v2h-5zM1426.0 368.80h3v2h-3zM1430.0 368.80h6v2h-6zM1401.0 371.80h5v2h-5zM1401.0 374.80h5v2h-5zM1407.0 374.80h1v2h-1zM1403.0 377.80h16v2h-16zM1421.0 377.80h5v2h-5zM1427.0 377.80h1v2h-1zM1405.0 380.80h21v2h-21zM1407.0 383.80h24v2h-24zM1405.0 386.80h1v2h-1zM1403.0 389.80h1v2h-1zM1401.0 392.80h1v2h-1zM1399.0 395.80h1v2h-1zM1397.0 398.80h1v2h-1zM1395.0 401.80h1v2h-1zM1393.0 404.80h1v2h-1zM1391.0 407.80h1v2h-1zM1389.0 410.80h1v2h-1z"/><path fill="#b48ead" d="M1404.0 143.80h2v2h-2zM1406.0 146.80h3v2h-3zM1402.0 149.80h1v2h-1zM1404.0 149.80h2v2h-2zM1410.0 176.80h3v2h-3zM1406.0 182.80h2v2h-2zM1404.0 185.80h1v2h-1zM1401.0 203.80h2v2h-2zM1406.0 203.80h1v2h-1zM1408.0 203.80h2v2h-2zM1413.0 203.80h1v2h-1z"/><path fill="#d08770" d="M1391.0 176.80h6v2h-6z"/><path fill="#88c0d0" d="M1391.0 221.80h6v2h-6zM1411.0 224.80h3v2h-3zM1407.0 227.80h3v2h-3zM1414.0 323.80h7v2h-7z"/><path fill="#4c566a" d="M1467.0 227.80h2v2h-2zM1471.0 227.80h3v2h-3zM1476.0 227.80h1v2h-1z"/></g></svg>
<svg class="abs" style="left:0;top:0" width="1437" height="1076" viewBox="56 32 1437 1076"><path d="M931 609.200L947.800 641.500 935.300 641 936.300 680 929.300 680.200 928 641 916 641.500Z" fill="#fff"/></svg><span class="t" style="left:803.60px;top:648.30px;line-height:50px;font-size:38px;color:#fff;letter-spacing:0.000px;font-weight:bold;-webkit-text-stroke:.55px #fff;transform-origin:0 50%;transform:scaleX(0.6389);">Decorations!</span>
<div class="abs" style="left:0px;top:1054px;width:1437px;height:22px;background:#3b4252;"></div>
<span class="t" style="left:27.20px;top:1056.20px;line-height:20px;font-size:12.4px;color:#e5e9f0;letter-spacing:0.262px;">Decorations*</span>
<span class="t" style="left:158.20px;top:1056.20px;line-height:20px;font-size:12.4px;color:#e5e9f0;letter-spacing:0.494px;">0</span>
<span class="t" style="left:185.60px;top:1056.20px;line-height:20px;font-size:12.4px;color:#e5e9f0;letter-spacing:0.594px;">0</span>
<span class="t" style="left:805.80px;top:1056.20px;line-height:20px;font-size:12.4px;color:#e5e9f0;letter-spacing:0.137px;">You, 13 days ago</span>
<span class="t" style="left:922.10px;top:1056.20px;line-height:20px;font-size:12.4px;color:#e5e9f0;letter-spacing:-0.071px;">Ln 19, Col 21</span>
<span class="t" style="left:1009.40px;top:1056.20px;line-height:20px;font-size:12.4px;color:#e5e9f0;letter-spacing:0.077px;">Spaces: 2</span>
<span class="t" style="left:1079.80px;top:1056.20px;line-height:20px;font-size:12.4px;color:#e5e9f0;letter-spacing:0.458px;">UTF-8</span>
<span class="t" style="left:1132.00px;top:1056.20px;line-height:20px;font-size:12.4px;color:#e5e9f0;letter-spacing:-0.134px;">LF</span>
<span class="t" style="left:1159.90px;top:1056.20px;line-height:20px;font-size:12.4px;color:#e5e9f0;letter-spacing:0.284px;">JavaScript</span>
<span class="t" style="left:1235.60px;top:1056.20px;line-height:20px;font-size:12.4px;color:#e5e9f0;letter-spacing:0.245px;">Prettier:</span>
<span class="t" style="left:1310.20px;top:1056.20px;line-height:20px;font-size:12.4px;color:#e5e9f0;letter-spacing:0.130px;">10:35 AM</span>
<svg class="abs" style="left:0;top:0" width="1437" height="1076" viewBox="56 32 1437 1076"><g fill="none" stroke="#e5e9f0" stroke-width="1.100"><circle cx="72.500" cy="1093" r="1.350"/><circle cx="72.500" cy="1102.300" r="1.350"/><circle cx="78.400" cy="1094.600" r="1.350"/><path d="M72.500 1094.400v6.500M78.400 1096c0 2.600-5.900 2.200-5.900 4.800"/></g><path d="M175.400 1101.400h-1a2.700 2.700 0 0 1 .2-5.400 3.800 3.800 0 0 1 7.400-.6 3 3 0 0 1 1.200 5.900h-.8" fill="none" stroke="#e5e9f0" stroke-width="1.200"/><path d="M179 1103.600v-6M176.400 1099.800l2.600-2.600 2.600 2.600" fill="none" stroke="#e5e9f0" stroke-width="1.300"/><circle cx="204.300" cy="1098" r="5.300" fill="#e5e9f0"/><path d="M202.100 1095.800l4.400 4.400M206.500 1095.800l-4.400 4.400" stroke="#3b4252" stroke-width="1.500"/><path d="M231.700 1092.400l5.600 10.600h-11.200z" fill="#e5e9f0"/><path d="M231.700 1096v3.600M231.700 1100.600v1.400" stroke="#3b4252" stroke-width="1.300"/><circle cx="267.200" cy="1097.800" r="5.100" fill="none" stroke="#e5e9f0" stroke-width="1.200"/><path d="M267.200 1094.600v3.400h3" fill="none" stroke="#e5e9f0" stroke-width="1.200"/><circle cx="852" cy="1097.600" r="2.300" fill="none" stroke="#e5e9f0" stroke-width="1.300"/><path d="M846.600 1097.600h3M854.400 1097.600h3" stroke="#e5e9f0" stroke-width="1.300"/><path d="M1340.600 1098.200l3 3 6.400-6.800" fill="none" stroke="#e5e9f0" stroke-width="1.700"/><circle cx="1442.800" cy="1097.800" r="6.600" fill="#e5e9f0"/><circle cx="1440.400" cy="1095.800" r="1" fill="#3b4252"/><circle cx="1445.200" cy="1095.800" r="1" fill="#3b4252"/><path d="M1439 1099.400a4.200 4.200 0 0 0 7.600 0" fill="none" stroke="#3b4252" stroke-width="1.200"/><path d="M1471.800 1091.600c3 0 4 2.400 4 4.600 0 2.400.8 3.400 2.200 4.600v1h-12.400v-1c1.400-1.200 2.200-2.200 2.200-4.600 0-2.200 1-4.600 4-4.600z" fill="#e5e9f0"/><path d="M1470.200 1102.800a1.600 1.600 0 0 0 3.200 0z" fill="#e5e9f0"/></svg>
</div>
</body>
</html>
